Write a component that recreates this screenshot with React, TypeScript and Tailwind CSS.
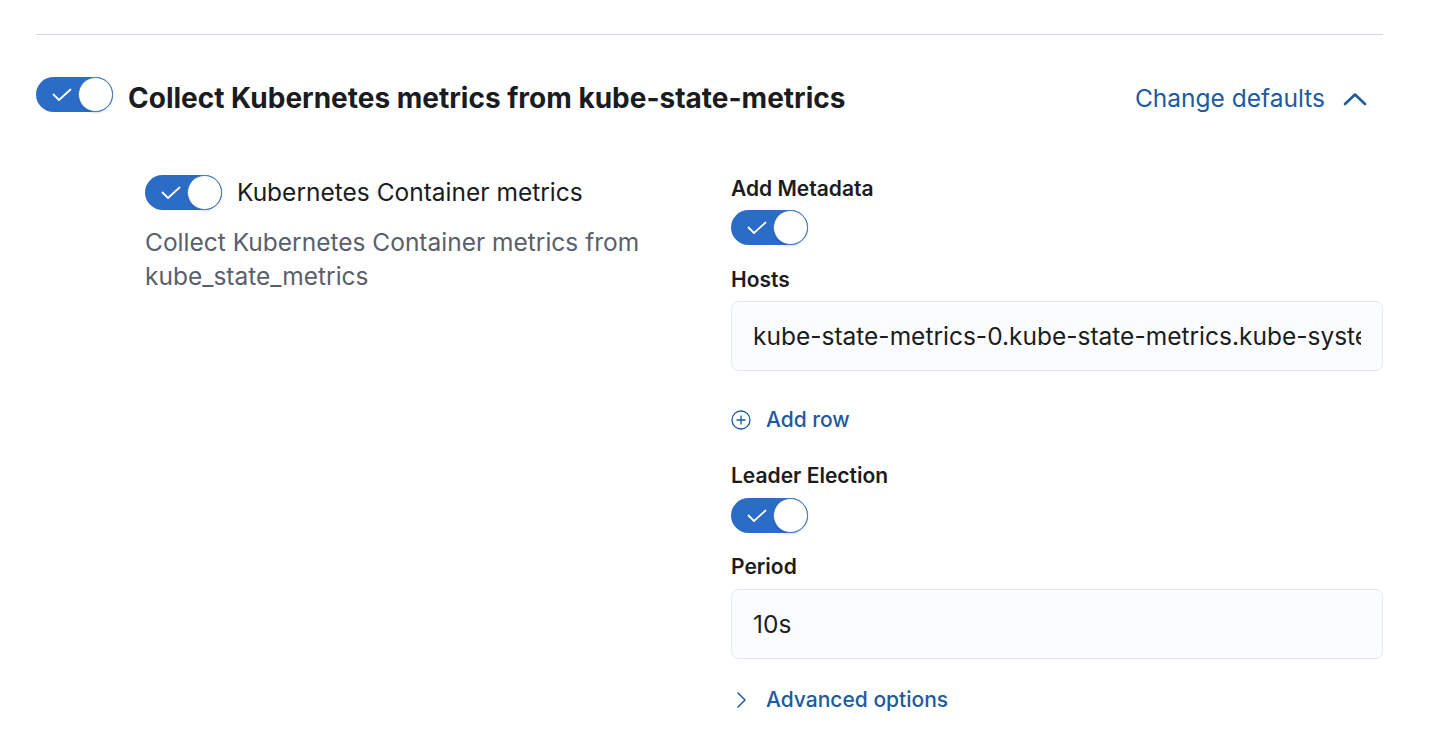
import React from "react";

const Toggle = () => (
  <div className="relative h-[35px] w-[77px] shrink-0 rounded-full bg-[#2b6cc6]">
    <svg
      className="absolute left-[16px] top-[11px]"
      width="20"
      height="14"
      viewBox="0 0 20 14"
      fill="none"
    >
      <path d="M1.5 6.5 L7 12 L18.5 1.5" stroke="white" strokeWidth="1.8" strokeLinecap="round" strokeLinejoin="round" />
    </svg>
    <div className="absolute right-0 top-0 h-[35px] w-[35px] rounded-full border border-[#3f79c9] bg-white shadow-[0_1px_2px_rgba(0,0,0,0.15)]" />
  </div>
);

const Label = ({ children }: { children: React.ReactNode }) => (
  <div className="text-[21px] font-semibold leading-[28px] text-[#1a1c21]">{children}</div>
);

const TextInput = ({ value }: { value: string }) => (
  <input
    readOnly
    value={value}
    className="block h-[70px] w-full rounded-[8px] border border-[#e3e7ef] bg-[#fbfcfd] px-[21px] text-[24.5px] text-[#1a1c21] outline-none"
    style={{ fontFamily: "Inter, 'Noto Sans', sans-serif" }}
  />
);

export default function App() {
  return (
    <div
      className="min-h-[742px] bg-white pl-[36px] pr-[70px] pt-[34px]"
      style={{ fontFamily: "Inter, 'Noto Sans', sans-serif" }}
    >
      <div className="border-t border-[#d3dae6]" />

      {/* section header */}
      <div className="mt-[42px] flex items-start justify-between">
        <div className="flex items-start gap-[15px]">
          <Toggle />
          <h2 className="mt-[4px] text-[28px] font-bold leading-[35px] text-[#1a1c21]">
            Collect Kubernetes metrics from kube-state-metrics
          </h2>
        </div>
        <button className="mr-[16px] mt-[4px] flex h-[35px] items-center gap-[18px] text-[24.5px] text-[#1d5a9f]">
          <span>Change defaults</span>
          <svg width="24" height="14" viewBox="0 0 24 14" fill="none">
            <path d="M2 12 L12 2.5 L22 12" stroke="#1d5a9f" strokeWidth="2.6" strokeLinecap="round" strokeLinejoin="round" />
          </svg>
        </button>
      </div>

      {/* stream settings */}
      <div className="mt-[58px] flex pl-[109px]">
        <div className="w-[586px] shrink-0">
          <div className="flex items-center gap-[15px]">
            <Toggle />
            <span className="text-[24.5px] text-[#1a1c21]">Kubernetes Container metrics</span>
          </div>
          <p className="mt-[14px] w-[540px] text-[24.5px] leading-[34px] text-[#5a606b]">
            Collect Kubernetes Container metrics from kube_state_metrics
          </p>
        </div>

        <div className="min-w-0 flex-1 pt-[1px]">
          <Label>Add Metadata</Label>
          <div className="mt-[7px]">
            <Toggle />
          </div>

          <div className="mt-[21px]">
            <Label>Hosts</Label>
          </div>
          <div className="mt-[7px]">
            <TextInput value="kube-state-metrics-0.kube-state-metrics.kube-system.svc.cluster.local:8080" />
          </div>

          <button className="mt-[35px] flex items-center gap-[15px] text-[21px] leading-[28px] text-[#1d5a9f]">
            <svg width="20" height="20" viewBox="0 0 20 20" fill="none">
              <circle cx="10" cy="10" r="9" stroke="#1d5a9f" strokeWidth="1.3" />
              <path d="M10 5.5 V14.5 M5.5 10 H14.5" stroke="#1d5a9f" strokeWidth="1.3" />
            </svg>
            <span className="font-medium">Add row</span>
          </button>

          <div className="mt-[28px]">
            <Label>Leader Election</Label>
          </div>
          <div className="mt-[8px]">
            <Toggle />
          </div>

          <div className="mt-[20px]">
            <Label>Period</Label>
          </div>
          <div className="mt-[8px]">
            <TextInput value="10s" />
          </div>

          <button className="mt-[27px] flex items-center gap-[19px] pl-[5px] text-[21px] leading-[28px] text-[#1d5a9f]">
            <svg width="11" height="18" viewBox="0 0 11 18" fill="none">
              <path d="M2 2 L9 9 L2 16" stroke="#1d5a9f" strokeWidth="1.5" strokeLinecap="round" strokeLinejoin="round" />
            </svg>
            <span className="font-medium">Advanced options</span>
          </button>
        </div>
      </div>
    </div>
  );
}
